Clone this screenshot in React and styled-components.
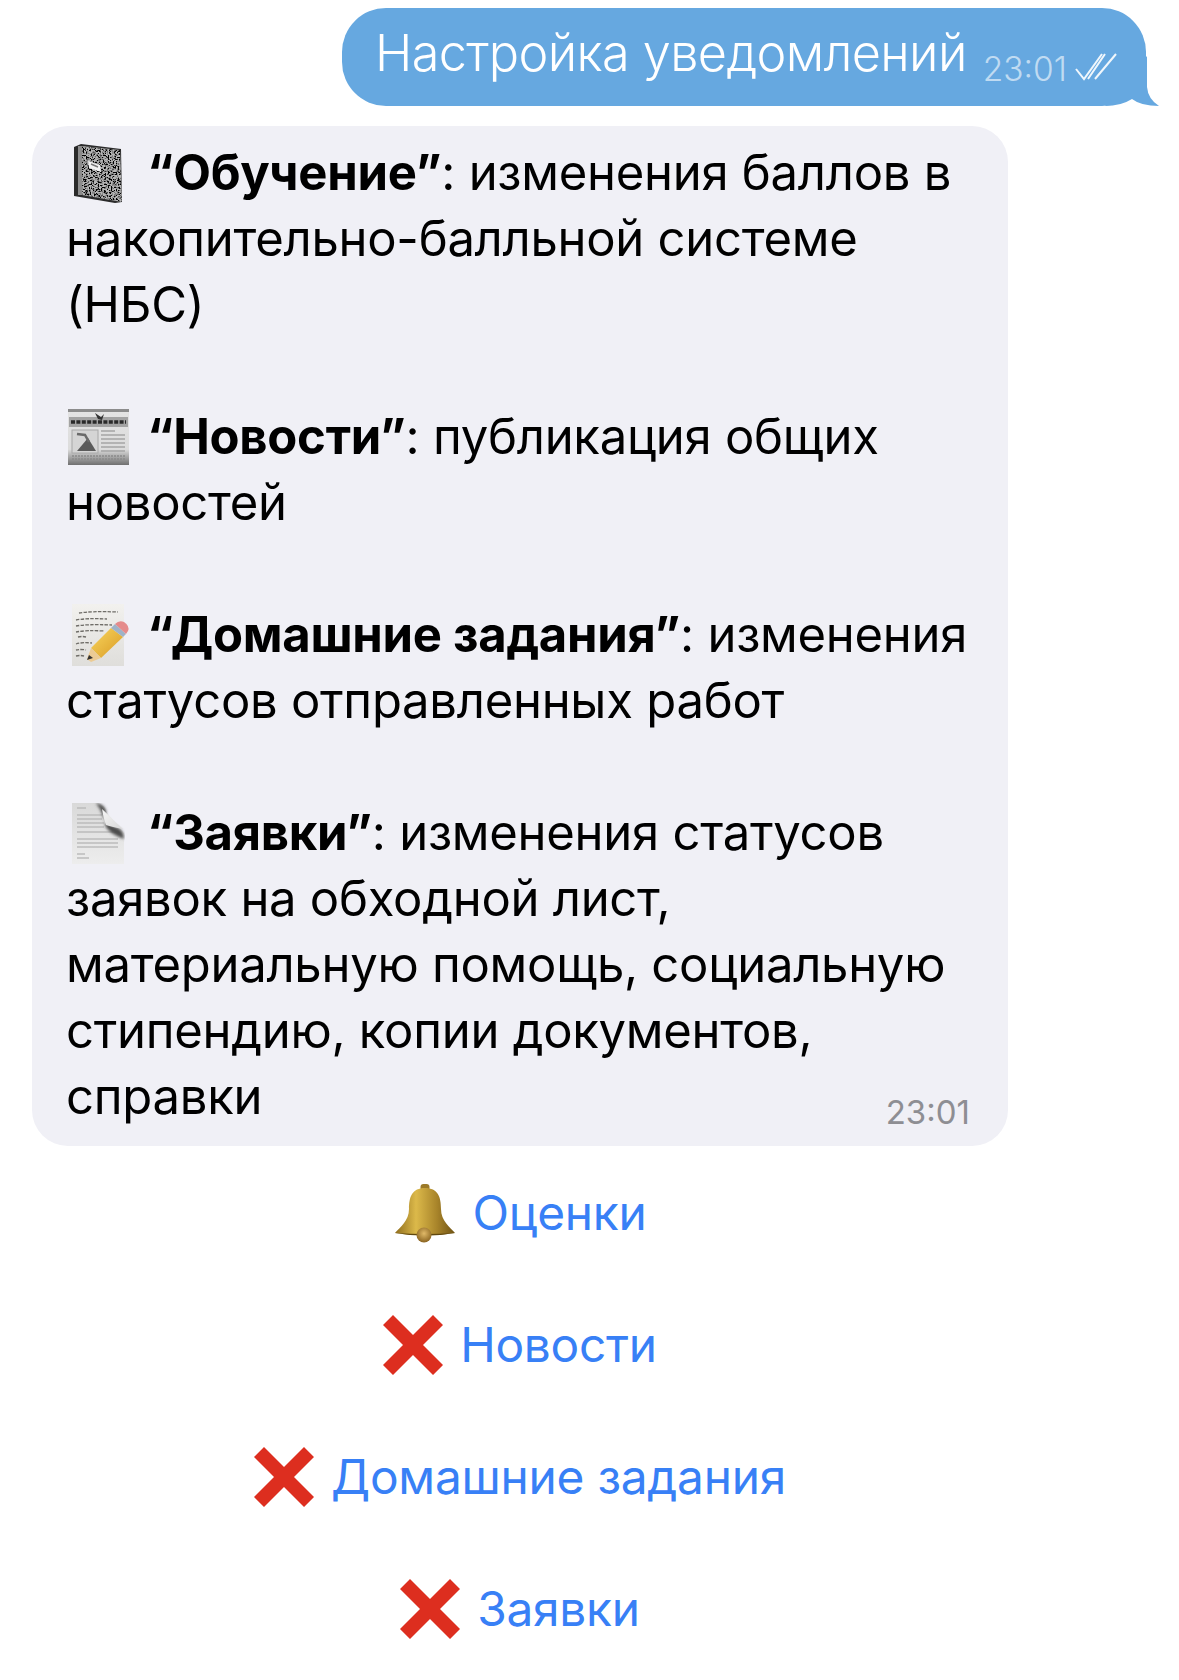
import React from "react";
import styled, { createGlobalStyle } from "styled-components";

const Global = createGlobalStyle`
  html, body { margin: 0; padding: 0; background: #fff; }
  body { font-family: "Inter", "Liberation Sans", sans-serif; color: #000; }
`;

const Page = styled.div`
  width: 1179px;
  height: 1680px;
  overflow: hidden;
  padding-top: 8px;
  box-sizing: border-box;
`;

const OutRow = styled.div`
  display: flex;
  justify-content: flex-end;
  padding-right: 33px;
`;

const OutBubble = styled.div`
  position: relative;
  width: 804px;
  height: 98px;
  box-sizing: border-box;
  padding: 0 24px 10px 33px;
  background: #66a8e0;
  border-radius: 44px;
  display: flex;
  align-items: center;
  color: #fff;
`;

const OutText = styled.span`
  font-size: 50.4px;
  font-weight: 300;
  letter-spacing: -0.6px;
  white-space: nowrap;
`;

const OutMeta = styled.span`
  display: flex;
  align-items: center;
  margin-left: 16px;
  margin-top: 34px;
  font-size: 33.5px;
  font-weight: 300;
  color: rgba(255, 255, 255, 0.6);
`;

const Checks = styled.svg`
  margin: -4px 0 0 7px;
`;

const Tail = styled.svg`
  position: absolute;
  right: -15px;
  bottom: 0;
`;

const InBubble = styled.div`
  margin: 20px 0 0 32px;
  width: 976px;
  height: 1020px;
  box-sizing: border-box;
  padding: 14px 38px 0 34px;
  background: #f0f0f6;
  border-radius: 36px;
`;

const Para = styled.p`
  margin: 0 0 66px;
  font-size: 49px;
  line-height: 66px;
  letter-spacing: -0.27px;
  white-space: nowrap;
`;

const Emoji = styled.svg`
  display: inline-block;
  vertical-align: ${(p) => p.$drop}px;
  margin-left: ${(p) => p.$left}px;
  margin-right: ${(p) => p.$right}px;
`;

const LastLine = styled.div`
  display: flex;
  justify-content: space-between;
  align-items: flex-end;
`;

const Time = styled.span`
  font-size: 33px;
  line-height: 40px;
  font-weight: 400;
  letter-spacing: 0;
  color: #8e8e93;
  margin-bottom: -2px;
`;

const Buttons = styled.div`
  width: 976px;
  margin: 0 0 0 32px;
  padding-top: 1px;
  display: flex;
  flex-direction: column;
`;

const Button = styled.div`
  height: 132px;
  display: flex;
  align-items: center;
  justify-content: center;
  gap: 17px;
  font-size: 47.8px;
  letter-spacing: -0.25px;
  color: #3880f6;
`;

function Notebook() {
  return (
    <Emoji $left={7} $right={24} $drop={-14} width="50" height="60" viewBox="0 0 50 60">
      <defs>
        <filter id="speckle" x="0" y="0" width="100%" height="100%">
          <feTurbulence type="fractalNoise" baseFrequency="0.6" numOctaves="2" seed="4" />
          <feColorMatrix values="0 0 0 0 0  0 0 0 0 0  0 0 0 0 0  4 4 0 0 -3.6" />
          <feComposite in2="SourceGraphic" operator="in" />
          <feMerge>
            <feMergeNode in="SourceGraphic" />
            <feMergeNode />
          </feMerge>
        </filter>
      </defs>
      <path d="M1 3 L8 0 L48 5 L49 58 L42 59 L1 52 Z" fill="#2a2a2a" />
      <path d="M9 2 L47 6 L49 58 L9 51 Z" fill="#b5b5b5" filter="url(#speckle)" />
      <path d="M5 2 L9 2 L9 51 L5 51 Z" fill="#8c8c8c" />
      <path d="M15 17 L27 21 L28 28 L16 24 Z" fill="#f2f2f2" />
      <path d="M18 20 L25 23" stroke="#777" strokeWidth="1.4" />
    </Emoji>
  );
}

function Newspaper() {
  return (
    <Emoji $left={2} $right={18} $drop={-11} width="61" height="56" viewBox="0 0 61 56">
      <defs>
        <linearGradient id="paperFade" x1="0" y1="0" x2="0" y2="1">
          <stop offset="0" stopColor="#e4e4e4" />
          <stop offset="0.72" stopColor="#dcdcdc" />
          <stop offset="1" stopColor="#707070" />
        </linearGradient>
        <filter id="soft"><feGaussianBlur stdDeviation="0.45" /></filter>
      </defs>
      <rect x="0" y="0" width="61" height="56" fill="url(#paperFade)" />
      <g filter="url(#soft)">
        <rect x="0" y="0" width="61" height="3" fill="#8c8c8c" />
        <rect x="1" y="8" width="59" height="10" fill="#a3a3a3" />
        <path d="M27 4 L33 8 L36 5 L34 11 L30 10 Z" fill="#333" />
        <path d="M3 13 H58" stroke="#2b2b2b" strokeWidth="3.4" strokeDasharray="4 1.4" />
        <rect x="4" y="21" width="26" height="23" fill="#d5d5d5" stroke="#a8a8a8" />
        <path d="M9 42 L20 29 L28 42 Z" fill="#5a5a5a" />
        <path d="M9 25 L17 26 L21 33" stroke="#6a6a6a" strokeWidth="2.5" fill="none" />
        <path d="M33 22 H47 M33 26 H57 M33 30 H57 M33 34 H57 M33 38 H57 M33 42 H57" stroke="#a5a5a5" strokeWidth="1.6" />
        <path d="M4 47 H57 M4 50 H57" stroke="#8a8a8a" strokeWidth="1.4" strokeDasharray="2 1" />
      </g>
    </Emoji>
  );
}

function Memo() {
  return (
    <Emoji $left={6} $right={17} $drop={-14} width="58" height="62" viewBox="0 0 58 62">
      <defs>
        <linearGradient id="pencilBody" x1="0" y1="0" x2="1" y2="1">
          <stop offset="0" stopColor="#f8d65e" />
          <stop offset="1" stopColor="#d99a24" />
        </linearGradient>
        <linearGradient id="memoPaper" x1="0" y1="0" x2="0" y2="1">
          <stop offset="0" stopColor="#f2f1ee" />
          <stop offset="1" stopColor="#dfdedb" />
        </linearGradient>
      </defs>
      <rect x="0" y="0" width="52" height="62" fill="url(#memoPaper)" />
      <g stroke="#6f6d68" strokeWidth="1.3" fill="none" strokeDasharray="3.5 1.3">
        <path d="M7 9 Q18 7 46 8" />
        <path d="M4 16 Q14 14 35 15" />
        <path d="M4 22 Q14 20 40 21" />
        <path d="M4 28 Q14 26 32 27" />
        <path d="M6 33 Q10 32 14 33" />
        <path d="M4 40 Q10 38 20 39" />
        <path d="M4 46 Q8 45 14 46" />
        <path d="M4 52 Q8 51 12 52" />
      </g>
      <path d="M39 24 L51 33 L29 54 L19 44 Z" fill="url(#pencilBody)" />
      <path d="M19 44 L29 54 L19 58 L15 55 Z" fill="#eccb94" />
      <path d="M15 55 L17 50 L21 53 Z" transform="translate(0 1)" fill="#333" />
      <path d="M39 24 L43 20 L54 30 L51 33 Z" fill="#9fb3c8" />
      <path d="M43 20 Q47 16 52 18 Q58 22 56 27 L54 30 Z" fill="#e58b8b" />
    </Emoji>
  );
}

function PageIcon() {
  return (
    <Emoji $left={6} $right={22} $drop={-14} width="53" height="61" viewBox="0 0 53 61">
      <defs>
        <linearGradient id="fold" x1="0" y1="0" x2="1" y2="1">
          <stop offset="0" stopColor="#f6f6f6" />
          <stop offset="1" stopColor="#d8d8d8" />
        </linearGradient>
        <linearGradient id="sheet" x1="0" y1="0" x2="0" y2="1">
          <stop offset="0" stopColor="#d9d9d9" />
          <stop offset="1" stopColor="#ededed" />
        </linearGradient>
        <filter id="shade"><feGaussianBlur stdDeviation="1.6" /></filter>
      </defs>
      <path d="M0 0 H26 Q33 2 35 10 L52 30 V61 H0 Z" fill="url(#sheet)" />
      <path d="M5 5 H14 M5 12 H30 M5 16 H30 M5 20 H32 M5 24 H32 M5 29 H46 M5 36 H46 M5 40 H46 M5 44 H46 M5 51 H13 M5 55 H17" stroke="#bcbcbc" strokeWidth="1.5" />
      <path d="M24 0 Q32 1 34 8 L33 22 Q36 30 52 36 Q52 28 46 25 L34 20 L28 6 Z" fill="#4c4c4c" filter="url(#shade)" />
      <path d="M30 6 L51 26 Q40 24 34 22 Q31 14 30 6 Z" fill="url(#fold)" />
    </Emoji>
  );
}

function Bell() {
  return (
    <svg width="62" height="60" viewBox="0 0 62 60">
      <defs>
        <linearGradient id="bellGold" x1="0" y1="0" x2="1" y2="0">
          <stop offset="0" stopColor="#8f6d1d" />
          <stop offset="0.35" stopColor="#dcb94a" />
          <stop offset="0.7" stopColor="#a8842a" />
          <stop offset="1" stopColor="#6e5213" />
        </linearGradient>
        <radialGradient id="clapper" cx="0.5" cy="0.4" r="0.6">
          <stop offset="0" stopColor="#e0b968" />
          <stop offset="1" stopColor="#8a6420" />
        </radialGradient>
      </defs>
      <rect x="26.5" y="1" width="9" height="7" rx="3" fill="#9c7a28" />
      <path d="M31 5 C44 5 47 14 47 26 C47 38 56 44 61 50 Q31 55 1 50 C6 44 15 38 15 26 C15 14 18 5 31 5 Z" fill="url(#bellGold)" />
      <path d="M1 50 Q31 55 61 50 Q31 52 1 50 Z" fill="#5f4710" />
      <circle cx="30" cy="52" r="7.5" fill="url(#clapper)" />
    </svg>
  );
}

function Cross() {
  return (
    <svg width="60" height="60" viewBox="0 0 60 60">
      <path d="M0 10 L10 0 L30 20 L50 0 L60 10 L40 30 L60 50 L50 60 L30 40 L10 60 L0 50 L20 30 Z" fill="#dd2e1f" />
    </svg>
  );
}

export default function App() {
  return (
    <Page>
      <Global />
      <OutRow>
        <OutBubble>
          <OutText>Настройка уведомлений</OutText>
          <OutMeta>
            23:01
            <Checks width="44" height="30" viewBox="0 0 44 30">
              <path d="M2 17 L10 27 L28 2 M14 27 L31 2 M21 27 L42 2" stroke="rgba(255,255,255,0.9)" strokeWidth="2" fill="none" />
            </Checks>
          </OutMeta>
          <Tail width="60" height="50" viewBox="0 0 60 50">
            <path d="M46 0 L46 31 Q47 43 58 50 Q40 50 31 43 Q20 50 4 50 Z" fill="#66a8e0" />
          </Tail>
        </OutBubble>
      </OutRow>

      <InBubble>
        <Para>
          <Notebook />
          <b>“Обучение”</b>: изменения баллов в
          <br />
          накопительно-балльной системе
          <br />
          (НБС)
        </Para>
        <Para>
          <Newspaper />
          <b>“Новости”</b>: публикация общих
          <br />
          новостей
        </Para>
        <Para>
          <Memo />
          <b>“Домашние задания”</b>: изменения
          <br />
          статусов отправленных работ
        </Para>
        <Para>
          <PageIcon />
          <b>“Заявки”</b>: изменения статусов
          <br />
          заявок на обходной лист,
          <br />
          материальную помощь, социальную
          <br />
          стипендию, копии документов,
          <LastLine>
            справки
            <Time>23:01</Time>
          </LastLine>
        </Para>
      </InBubble>

      <Buttons>
        <Button><Bell />Оценки</Button>
        <Button><Cross />Новости</Button>
        <Button><Cross />Домашние задания</Button>
        <Button><Cross />Заявки</Button>
      </Buttons>
    </Page>
  );
}
